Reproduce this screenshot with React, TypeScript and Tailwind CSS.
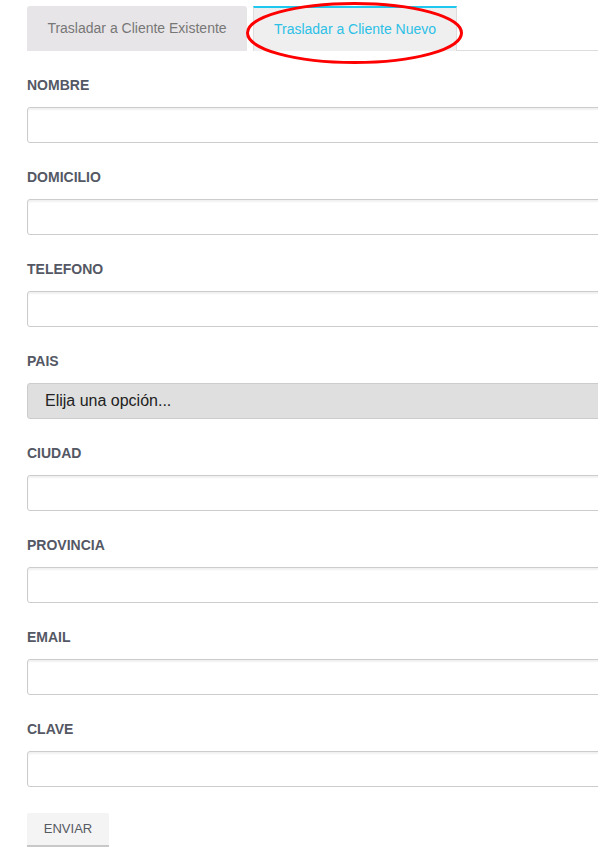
import { FC } from "react";

const fields = ["NOMBRE", "DOMICILIO", "TELEFONO", "PAIS", "CIUDAD", "PROVINCIA", "EMAIL", "CLAVE"];

const App: FC = () => {
  return (
    <div className="relative w-[598px] h-[858px] overflow-hidden bg-white font-['Liberation_Sans',Arial,sans-serif]">
      {/* tabs */}
      <div className="flex items-end pt-[6px] pl-[27px] h-[51px]">
        <div className="w-[220px] h-[45px] bg-[#e7e5e7] rounded-t-[3px] flex items-center justify-center text-[14px] text-[#777777]">
          Trasladar a Cliente Existente
        </div>
        <div className="ml-[6px] w-[204px] h-[45px] bg-[#efefef] border-t-2 border-x border-t-[#1ec8ee] border-x-[#dddddd] flex items-center justify-center text-[14px] text-[#2cc0e6]">
          Trasladar a Cliente Nuevo
        </div>
        <div className="flex-1 border-b border-[#dddddd]" />
      </div>

      {/* highlight */}
      <svg className="absolute left-0 top-0 pointer-events-none" width="598" height="80">
        <ellipse cx="354.5" cy="33" rx="107" ry="29.5" fill="none" stroke="#ff0000" strokeWidth="3" />
      </svg>

      <form className="pl-[27px] pt-[25px]">
        {fields.map((f) => (
          <div key={f} className="flex flex-col mb-[25px]">
            <label className="text-[14px] leading-[18px] font-bold text-[#545864]">{f}</label>
            {f === "PAIS" ? (
              <div className="mt-[13px] w-[600px] h-[36px] bg-[#dfdfdf] border border-[#cccccc] rounded-[3px] flex items-center pl-[17px] text-[16px] text-[#222222]">
                Elija una opción...
              </div>
            ) : (
              <input
                type="text"
                className="mt-[13px] w-[600px] h-[36px] bg-white border border-[#cccccc] rounded-[3px] shadow-[inset_0_2px_2px_rgba(0,0,0,0.06)] outline-none"
              />
            )}
          </div>
        ))}
        <button
          type="button"
          className="mt-px w-[82px] h-[34px] bg-[#f4f4f4] border-b-2 border-[#c8c8c8] rounded-t-[2px] text-[13px] text-[#555a63]"
        >
          ENVIAR
        </button>
      </form>
    </div>
  );
};

export default App;
